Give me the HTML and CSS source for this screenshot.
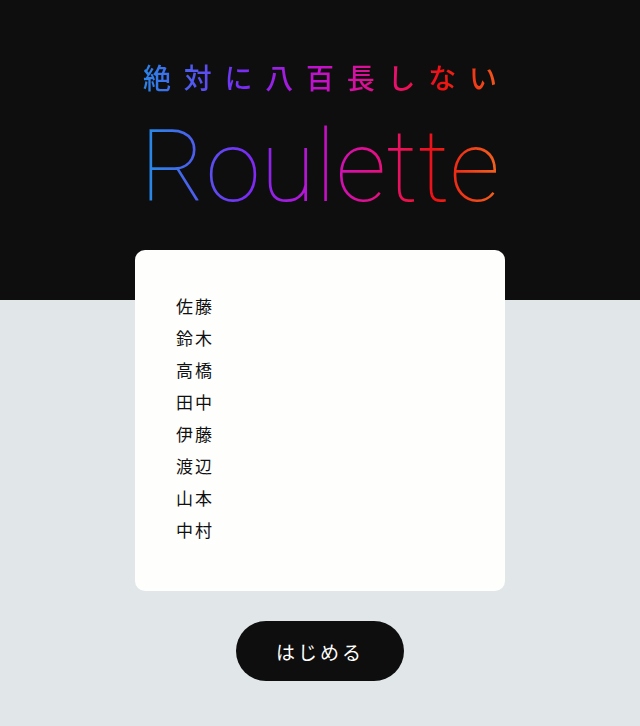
FILE: index.html
```html
<!DOCTYPE html>
<html lang="ja">
<head>
    <meta charset="UTF-8">
    <meta name="viewport" content="width=device-width, initial-scale=1.0">
    <title>Roulette</title>
    <link rel="stylesheet" href="styles.css">
</head>
<body>
    <header class="hero">
        <p class="subtitle">絶対に八百長しない</p>
        <h1 class="title">Roulette</h1>
    </header>

    <main class="main">
        <div class="card">
            <ul class="names">
                <li>佐藤</li>
                <li>鈴木</li>
                <li>高橋</li>
                <li>田中</li>
                <li>伊藤</li>
                <li>渡辺</li>
                <li>山本</li>
                <li>中村</li>
            </ul>
        </div>
        <button class="start-button">はじめる</button>
    </main>
</body>
</html>
```

FILE: styles.css
```css
* {
    box-sizing: border-box;
}

body {
    margin: 0;
    font-family: "Noto Sans CJK JP", "Noto Sans", sans-serif;
    background-color: #e1e6e9;
    color: #111;
}

.hero {
    background-color: #0e0e0e;
    height: 300px;
    padding-top: 57px;
    text-align: center;
}

.subtitle,
.title {
    background: linear-gradient(90deg, #2090e6 0%, #7a2cf6 30%, #c410cc 50%, #e8107a 68%, #ee1212 82%, #f2661e 100%);
    -webkit-background-clip: text;
    background-clip: text;
    color: transparent;
}

.subtitle {
    display: inline-block;
    margin: 0;
    font-size: 28px;
    font-weight: 500;
    line-height: 40px;
    letter-spacing: 12.75px;
    padding-left: 12.75px;
}

.title {
    display: block;
    width: max-content;
    margin: 15px auto 0;
    font-family: Roboto, sans-serif;
    font-weight: 100;
    font-size: 100px;
    line-height: 110px;
}

.main {
    display: flex;
    flex-direction: column;
    align-items: center;
    margin-top: -50px;
}

.card {
    width: 370px;
    height: 341px;
    background-color: #fefefd;
    border-radius: 10px;
    padding: 40px 41px;
}

.names {
    list-style: none;
    margin: 0;
    padding: 0;
}

.names li {
    font-size: 17px;
    line-height: 32px;
    letter-spacing: 2px;
}

.start-button {
    margin-top: 30px;
    width: 168px;
    height: 60px;
    border: none;
    border-radius: 30px;
    background-color: #0e0e0e;
    color: #fff;
    font-family: "Noto Sans CJK JP", sans-serif;
    font-size: 19px;
    letter-spacing: 3px;
    cursor: pointer;
}
```
